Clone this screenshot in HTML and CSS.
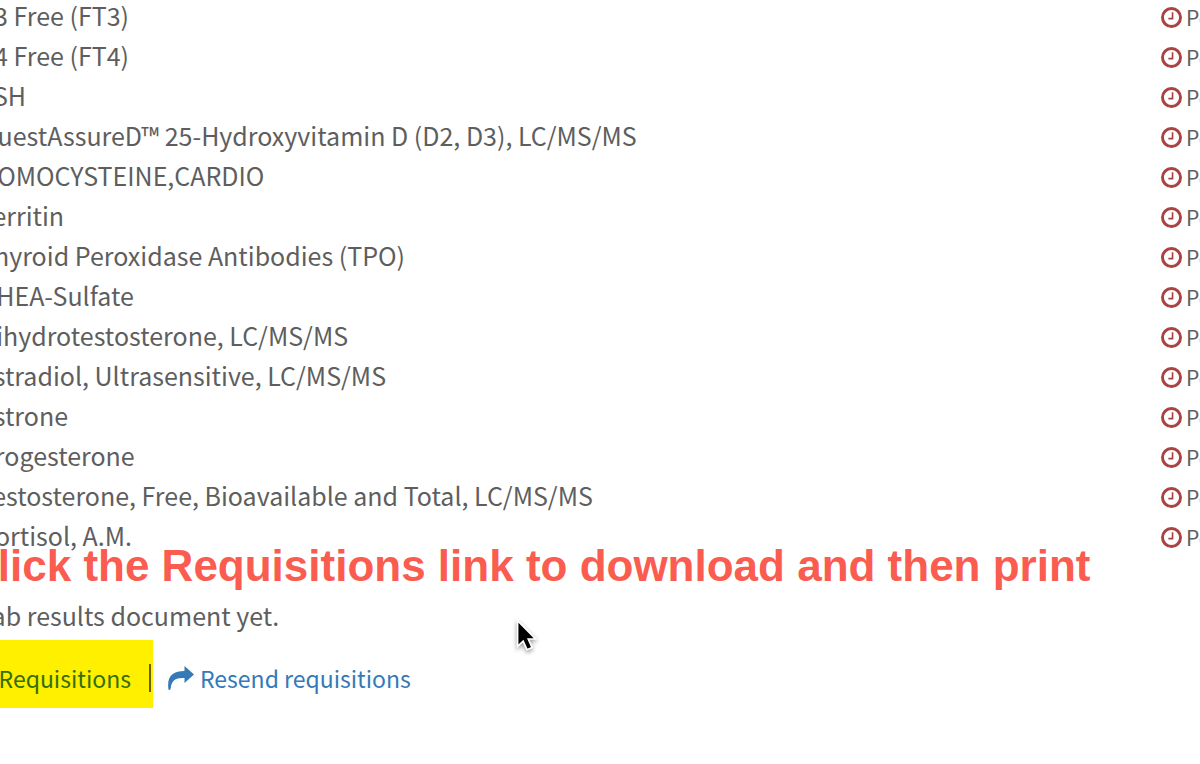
FILE: index.html
```html
<!DOCTYPE html>
<html lang="en">
<head>
<meta charset="utf-8">
<title>Lab tests</title>
<link rel="stylesheet" href="styles.css">
</head>
<body>
<svg class="defs" aria-hidden="true">
  <symbol id="clock" viewBox="0 0 20 20">
    <circle cx="10" cy="10" r="8.6" fill="none" stroke="currentColor" stroke-width="2.8"/>
    <path d="M11 5v6H7" fill="none" stroke="currentColor" stroke-width="1.6"/>
  </symbol>
</svg>
<main class="page">
  <ul class="tests">
    <li class="test"><span>T3 Free (FT3)</span><span class="status"><svg class="clock"><use href="#clock"/></svg>Pending</span></li>
    <li class="test"><span>T4 Free (FT4)</span><span class="status"><svg class="clock"><use href="#clock"/></svg>Pending</span></li>
    <li class="test"><span>TSH</span><span class="status"><svg class="clock"><use href="#clock"/></svg>Pending</span></li>
    <li class="test"><span>QuestAssureD™ 25-Hydroxyvitamin D (D2, D3), LC/MS/MS</span><span class="status"><svg class="clock"><use href="#clock"/></svg>Pending</span></li>
    <li class="test"><span>HOMOCYSTEINE,CARDIO</span><span class="status"><svg class="clock"><use href="#clock"/></svg>Pending</span></li>
    <li class="test"><span>Ferritin</span><span class="status"><svg class="clock"><use href="#clock"/></svg>Pending</span></li>
    <li class="test"><span>Thyroid Peroxidase Antibodies (TPO)</span><span class="status"><svg class="clock"><use href="#clock"/></svg>Pending</span></li>
    <li class="test"><span>DHEA-Sulfate</span><span class="status"><svg class="clock"><use href="#clock"/></svg>Pending</span></li>
    <li class="test"><span>Dihydrotestosterone, LC/MS/MS</span><span class="status"><svg class="clock"><use href="#clock"/></svg>Pending</span></li>
    <li class="test"><span>Estradiol, Ultrasensitive, LC/MS/MS</span><span class="status"><svg class="clock"><use href="#clock"/></svg>Pending</span></li>
    <li class="test"><span>Estrone</span><span class="status"><svg class="clock"><use href="#clock"/></svg>Pending</span></li>
    <li class="test"><span>Progesterone</span><span class="status"><svg class="clock"><use href="#clock"/></svg>Pending</span></li>
    <li class="test"><span>Testosterone, Free, Bioavailable and Total, LC/MS/MS</span><span class="status"><svg class="clock"><use href="#clock"/></svg>Pending</span></li>
    <li class="test"><span>Cortisol, A.M.</span><span class="status"><svg class="clock"><use href="#clock"/></svg>Pending</span></li>
  </ul>
  <p class="note">Lab results document yet.</p>
  <div class="actions">
    <div class="marked"><a class="requisitions" href="#requisitions">Requisitions</a><span class="divider"></span></div>
    <a class="resend" href="#resend"><svg class="share" viewBox="0 0 26 24"><path d="M0.500 23.500C-1.500 10 5 5 16.500 5V0L26 8.500L16.500 17V12C8 11.500 3.500 14 2.800 22Q2 25 0.500 23.500Z" fill="currentColor"/></svg>Resend requisitions</a>
  </div>
  <p class="callout">Click the Requisitions link to download and then print</p>
  <svg class="cursor" viewBox="0 0 28 40" aria-hidden="true"><path d="M3 2V32L9.500 26L14 36L20 33.500L15.500 23.500H24Z" fill="#000" stroke="#fff" stroke-width="2"/></svg>
</main>
</body>
</html>
```
FILE: styles.css
```css
body {
  margin: 0;
  background: #fff;
  color: #5e5e5e;
  font-family: "Noto Sans CJK SC", "Noto Sans", sans-serif;
  font-size: 25px;
  line-height: 36px;
  overflow: hidden;
}

.defs {
  position: absolute;
  width: 0;
  height: 0;
}

.page {
  position: relative;
  margin-top: -3px;
  white-space: nowrap;
}

.tests {
  margin: 0 0 0 -21px;
  padding: 0;
  list-style: none;
}

.test {
  display: flex;
  justify-content: space-between;
  height: 40px;
}

.status {
  display: flex;
  align-items: center;
  gap: 4px;
  width: 39px;
  overflow: hidden;
  font-size: 21px;
}

.clock {
  flex: none;
  width: 21px;
  height: 21px;
  color: #a94442;
}

.note {
  margin: 40px 0 7px -22px;
}

.actions {
  display: flex;
  align-items: center;
  gap: 15px;
  font-size: 23px;
}

.marked {
  display: flex;
  align-items: center;
  justify-content: flex-end;
  gap: 18px;
  box-sizing: border-box;
  width: 153px;
  height: 68px;
  padding: 8px 2px 0 0;
  background: #fff000;
}

.requisitions {
  color: #336f00;
  text-decoration: none;
}

.divider {
  flex: none;
  width: 2px;
  height: 28px;
  background: #6b5f00;
}

.resend {
  display: flex;
  align-items: center;
  gap: 6px;
  padding-top: 8px;
  color: #337ab7;
  text-decoration: none;
}

.share {
  width: 26px;
  height: 24px;
}

.callout {
  position: absolute;
  top: 544px;
  left: -34px;
  margin: 0;
  color: #fb5c50;
  font: bold 44px/50px "Liberation Sans", Arial, sans-serif;
}

.cursor {
  position: absolute;
  top: 621px;
  left: 515px;
  width: 24px;
  height: 36px;
  filter: drop-shadow(0 2px 2px rgba(0, 0, 0, 0.4));
}
```
